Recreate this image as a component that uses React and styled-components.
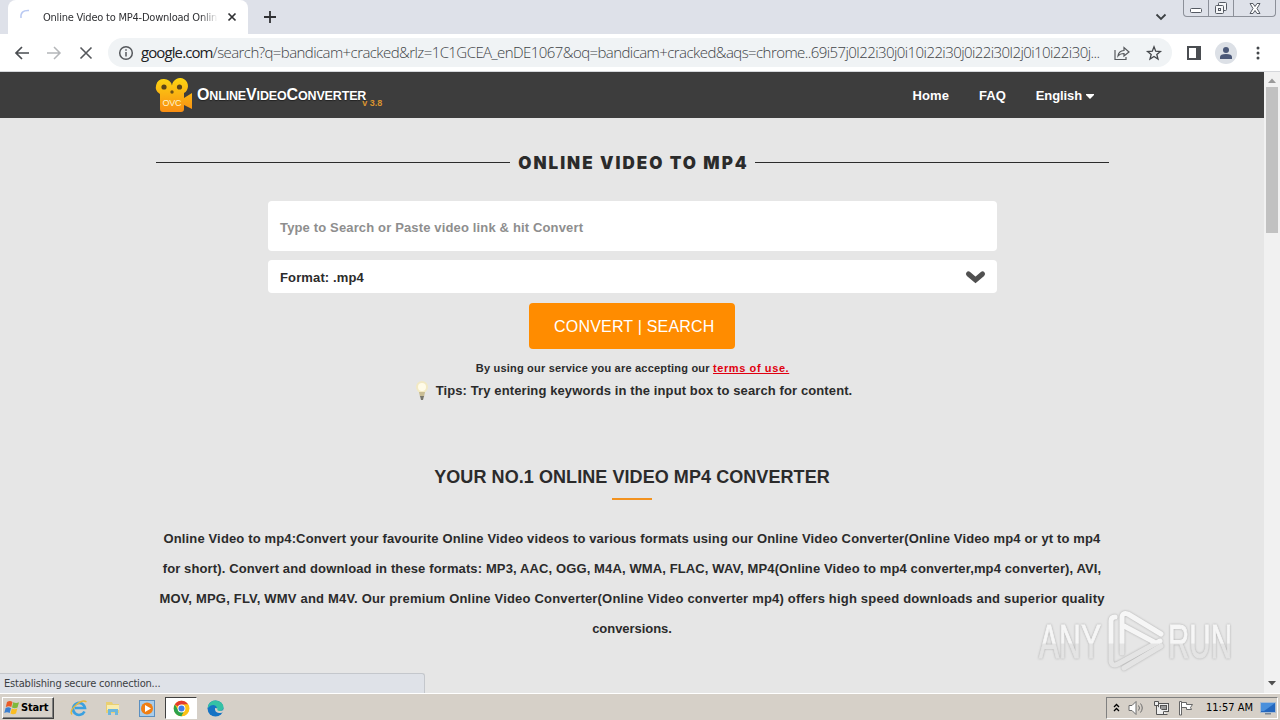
import React from "react";
import styled, { createGlobalStyle } from 'styled-components'

// page styles

const GlobalStyle = createGlobalStyle`
  * {
    box-sizing: border-box;
  }
  body {
    margin: 0;
    overflow: hidden;
    background: #e6e6e6;
    font-family: "Liberation Sans", Arial, sans-serif;
  }
  svg {
    display: block;
    flex: none;
    overflow: visible;
  }
`

const Screen = styled.div`
  position: relative;
  display: flex;
  flex-direction: column;
  width: 1280px;
  height: 720px;
  overflow: hidden;
`

// browser chrome

const TabStrip = styled.div`
  display: flex;
  height: 34px;
  flex: none;
  background: #dee1e9;
`

const Tab = styled.div`
  display: flex;
  align-items: center;
  width: 240px;
  margin-left: 8px;
  padding: 0 10px 0 12px;
  background: #fff;
  border-radius: 8px 8px 0 0;
`

const TabTitle = styled.div`
  width: 175px;
  margin-left: 8px;
  padding-top: 1px;
  white-space: nowrap;
  font: 11px/16px "DejaVu Sans Condensed", "DejaVu Sans", sans-serif;
  letter-spacing: ${props => props.$spacing};
  color: #303134;
  mask-image: linear-gradient(to right, #000 90%, transparent);
`

const TabClose = styled.div`
  margin-left: 8px;
`

const NewTab = styled.div`
  margin: 11px 0 0 16px;
`

const StripEnd = styled.div`
  display: flex;
  margin-left: auto;
  gap: 16px;
`

const WindowButtons = styled.div`
  display: flex;
  width: 93px;
  height: 17px;
  margin-right: 4px;
  border: 1px solid #8c9099;
  border-top: none;
  border-radius: 0 0 4px 4px;
`

const WindowButton = styled.div`
  display: flex;
  align-items: center;
  justify-content: center;
  width: ${props => props.$width};
  border-right: ${props => props.$last ? 'none' : '1px solid #8c9099'};
`

const Toolbar = styled.div`
  display: flex;
  align-items: center;
  height: 38px;
  flex: none;
  padding-left: 14px;
  background: #fff;
  border-bottom: 1px solid #d5d7db;
`

const NavIcons = styled.div`
  display: flex;
  gap: 16px;
`

const AddressBar = styled.div`
  display: flex;
  align-items: center;
  width: 1064px;
  height: 29px;
  margin-left: 14px;
  padding: 0 10px;
  border-radius: 15px;
  background: #f0f3f5;
`

const Url = styled.div`
  width: 973px;
  flex: none;
  margin-left: 7px;
  padding-bottom: 1px;
  white-space: nowrap;
  font: 300 15px/20px "Open Sans", sans-serif;
  letter-spacing: ${props => props.$spacing};
  color: #3f4347;
  span {
    font-weight: 400;
    letter-spacing: -0.9px;
    color: #202124;
  }
`

const BarIcons = styled.div`
  display: flex;
  gap: 16px;
`

const ToolbarEnd = styled.div`
  display: flex;
  align-items: center;
  gap: 10px;
  margin-left: 14px;
`

const Avatar = styled.div`
  display: flex;
  align-items: center;
  justify-content: center;
  width: 22px;
  height: 22px;
  border-radius: 50%;
  margin-left: 3px;
  background: #dce0e6;
`

// site

const View = styled.div`
  display: flex;
  height: 621px;
  flex: none;
`

const Page = styled.div`
  display: flex;
  flex-direction: column;
  width: 1264px;
  background: #e6e6e6;
  color: #2b2b2b;
`

const SiteHeader = styled.div`
  display: flex;
  align-items: center;
  height: 46px;
  flex: none;
  padding: 1px 170px 0 156px;
  background: #3d3d3d;
`

const Brand = styled.div`
  display: flex;
  align-items: flex-end;
  color: #fff;
  font-weight: bold;
  white-space: nowrap;
`

const BrandName = styled.div`
  margin: 0 0 8px 4px;
  font-size: 12.5px;
  line-height: 18px;
  letter-spacing: ${props => props.$spacing};
  text-shadow: 0 1px 1px #222;
  big {
    font-size: 16px;
  }
`

const Version = styled.div`
  margin: 0 0 5px -4px;
  font-size: 9px;
  line-height: 10px;
  letter-spacing: 0;
  color: #d9942f;
`

const Menu = styled.div`
  display: flex;
  gap: 30px;
  margin-left: auto;
  padding-top: 1px;
`

const MenuItem = styled.div`
  display: flex;
  align-items: center;
  gap: 4px;
  font-size: 13px;
  font-weight: bold;
  line-height: 20px;
  letter-spacing: ${props => props.$spacing};
  color: #fff;
`

const PageTitle = styled.div`
  display: flex;
  align-items: center;
  height: 24px;
  margin: 32px 155px 27px 156px;
  gap: 8px;
  font: 900 17px/24px Inter, sans-serif;
  letter-spacing: ${props => props.$spacing};
  white-space: nowrap;
  span {
    padding-top: 1px;
    margin-right: -2px;
  }
  &:before, &:after {
    content: '';
    height: 1px;
    flex: 1;
    background: #2b2b2b;
  }
`

const FormBox = styled.div`
  display: flex;
  flex-direction: column;
  align-items: center;
  width: 729px;
  margin-left: 268px;
`

const Field = styled.div`
  display: flex;
  align-items: center;
  justify-content: space-between;
  width: 100%;
  height: ${props => props.$height};
  margin-bottom: ${props => props.$gap};
  padding: 2px 12px 0;
  border-radius: 4px;
  background: #fff;
  font-size: 13px;
  font-weight: bold;
  letter-spacing: ${props => props.$spacing};
  color: ${props => props.$color};
`

const ConvertButton = styled.div`
  width: 206px;
  height: 46px;
  margin-right: 1px;
  padding-left: 25px;
  border-radius: 4px;
  background: #ff8c00;
  color: #fff;
  font-size: 16px;
  line-height: 47px;
  letter-spacing: ${props => props.$spacing};
  white-space: nowrap;
`

const Terms = styled.div`
  margin-top: 11px;
  font-size: 11px;
  font-weight: bold;
  line-height: 16px;
  letter-spacing: ${props => props.$spacing};
  white-space: nowrap;
  span {
    letter-spacing: 0.6px;
    color: #e00010;
    text-decoration: underline;
  }
`

const Tips = styled.div`
  display: flex;
  align-items: center;
  gap: 5px;
  margin-top: 2px;
  height: 24px;
  font-size: 13px;
  font-weight: bold;
  letter-spacing: ${props => props.$spacing};
  white-space: nowrap;
`

const SectionTitle = styled.div`
  margin-top: 62px;
  text-align: center;
  font-size: 18px;
  font-weight: bold;
  line-height: 26px;
  letter-spacing: ${props => props.$spacing};
  &:after {
    content: '';
    display: block;
    width: 40px;
    height: 2px;
    margin: 8px auto 0;
    background: #f2921f;
  }
`

const Description = styled.div`
  margin-top: 24px;
  text-align: center;
  font-size: 13px;
  font-weight: bold;
  line-height: 30px;
  white-space: nowrap;
`

const Line = styled.div`
  letter-spacing: ${props => props.$spacing};
`

const Scrollbar = styled.div`
  display: flex;
  flex-direction: column;
  align-items: center;
  width: 16px;
  padding: 6px 0 7px;
  background: #f1f1f1;
`

const Thumb = styled.div`
  width: 12px;
  height: 146px;
  margin: 4px 0 auto;
  background: #c1c1c1;
`

const StatusBubble = styled.div`
  position: absolute;
  left: 0;
  top: 673px;
  width: 425px;
  height: 20px;
  padding-left: 4px;
  border: 1px solid #c4c7cc;
  border-width: 1px 1px 0 0;
  border-radius: 0 3px 0 0;
  background: #dfe2e8;
  font: 11px/19px "DejaVu Sans Condensed", "DejaVu Sans", sans-serif;
  letter-spacing: ${props => props.$spacing};
  color: #3c4043;
`

const Watermark = styled.div`
  position: absolute;
  left: 1036px;
  top: 605px;
  filter: drop-shadow(0 0 1px #aaa);
`

// taskbar

const Taskbar = styled.div`
  display: flex;
  align-items: center;
  height: 27px;
  flex: none;
  padding: 2px 2px 0 2px;
  border-top: 1px solid #fff;
  background: #d6d0c8;
`

const StartButton = styled.div`
  display: flex;
  align-items: center;
  gap: 1px;
  width: 52px;
  height: 22px;
  padding-left: 1px;
  border: 1px solid;
  border-color: #fff #404040 #404040 #fff;
  box-shadow: inset -1px -1px 0 #808080;
  font: bold 11px/20px "DejaVu Sans Condensed", "DejaVu Sans", sans-serif;
  letter-spacing: ${props => props.$spacing};
  color: #000;
`

const QuickLaunch = styled.div`
  display: flex;
  align-items: center;
  margin-left: 8px;
`

const LaunchItem = styled.div`
  display: flex;
  align-items: center;
  justify-content: center;
  width: 34px;
  height: 22px;
`

const ActiveItem = styled(LaunchItem)`
  width: 32px;
  margin: 0 1px;
  border: 1px solid;
  border-color: #404040 #fff #fff #404040;
  background: #fff;
`

const Tray = styled.div`
  display: flex;
  align-items: center;
  height: 22px;
  width: 172px;
  margin-left: auto;
  padding-left: 6px;
  border: 1px solid;
  border-color: #808080 #fff #fff #808080;
`

const Clock = styled.div`
  width: 48px;
  margin: 0 6px 0 12px;
  white-space: nowrap;
  font: 11px/20px "DejaVu Sans Condensed", "DejaVu Sans", sans-serif;
  letter-spacing: ${props => props.$spacing};
  color: #000;
`

const TrayIcons = styled.div`
  display: flex;
  align-items: center;
  gap: 8px;
`

const CameraLogo = () => (
  <svg width="37" height="34" viewBox="0 0 37 34">
    <defs>
      <linearGradient id="cam" x1="0" y1="0" x2="0" y2="1">
        <stop offset="0" stopColor="#fbd512" />
        <stop offset="1" stopColor="#f98d12" />
      </linearGradient>
    </defs>
    <path fill="url(#cam)" d="M8 0a8 8 0 0 1 8 6.500a8 8 0 1 1 12 7.500V19l8-5v16l-8-4v4q0 3-3 3H7q-3 0-3-3V15A8 8 0 0 1 8 0z" />
    <circle cx="8" cy="8" r="2.600" fill="#5a4518" />
    <circle cx="23.500" cy="8" r="2.600" fill="#5a4518" />
    <circle cx="16" cy="13" r="1.700" fill="#6e5218" />
    <text x="6.500" y="27" fontSize="9" fontWeight="400" textLength="19" fill="#fff3d0">OVC</text>
  </svg>
)

const StartFlag = () => (
  <svg width="16" height="16" viewBox="0 0 16 16">
    <path d="M3 2q3-2 5.500 0L7.300 7Q5 5.500 1.800 7z" fill="#ea5b26" />
    <path d="M9.200 2.300q3 1.500 5.800 0L13.500 7.500q-2.700 1.500-5.500 0z" fill="#7fb93c" />
    <path d="M1.600 8Q4.500 6.500 7 8.200L5.700 13Q3 11.500.3 13z" fill="#3b7fd0" />
    <path d="M7.800 8.600q2.700 1.500 5.500 0L12 13.400q-3 1.500-5.500 0z" fill="#fbbd22" />
  </svg>
)

const ChromeIcon = () => (
  <svg width="17" height="17" viewBox="0 0 48 48">
    <circle cx="24" cy="24" r="22" fill="#fbc116" />
    <path d="M24 24L5 13A22 22 0 0 1 43 13H24z" fill="#e33b2e" />
    <path d="M5 13L15 29L24 24L33 29L24 46A22 22 0 0 1 5 13z" fill="#2da24c" />
    <path d="M43 13A22 22 0 0 1 24 46L33 29V13z" fill="#fbc116" />
    <circle cx="24" cy="24" r="11" fill="#fff" />
    <circle cx="24" cy="24" r="8.500" fill="#3f7de8" />
  </svg>
)

const AnyRunMark = () => (
  <svg width="200" height="72" viewBox="0 0 200 72">
    <defs>
      <linearGradient id="wm" x1="0" y1="0" x2="0" y2="72" gradientUnits="userSpaceOnUse">
        <stop offset=".53" stopColor="#f6f6f6" />
        <stop offset=".54" stopColor="#e4e4e4" />
      </linearGradient>
    </defs>
    <g fill="url(#wm)" stroke="url(#wm)" strokeWidth="1" fontFamily="Liberation Sans Narrow, Liberation Sans, sans-serif" fontSize="49">
      <text x="3" y="53" textLength="62" lengthAdjust="spacingAndGlyphs">ANY</text>
      <text x="132" y="53" textLength="64" lengthAdjust="spacingAndGlyphs">RUN</text>
    </g>
    <g fill="none" stroke="url(#wm)" strokeWidth="5" strokeLinejoin="round" strokeLinecap="round">
      <path d="M79 12q-4 0-4 4v40q1 6 7 3l42-23" />
      <path d="M125 29L92 9q-6-2-6 4v35" />
      <path d="M88 63l37-22M88 21l30 16" />
    </g>
  </svg>
)

const App = () => {
  return (
    <Screen>
      <GlobalStyle />
      <TabStrip>
        <Tab>
          <svg width="15" height="16" viewBox="0 0 15 16" fill="none">
            <path d="M1 9Q0 1 9 1.500" stroke="#b9c9f2" strokeWidth="1.500" />
          </svg>
          <TabTitle $spacing="-0.22px">Online Video to MP4-Download Onlin</TabTitle>
          <TabClose>
            <svg width="12" height="12" viewBox="0 0 12 12" stroke="#303134" strokeWidth="1.700">
              <path d="M2.500 2.500l7 7M9.500 2.500l-7 7" />
            </svg>
          </TabClose>
        </Tab>
        <NewTab>
          <svg width="12" height="12" viewBox="0 0 12 12" stroke="#303134" strokeWidth="1.800">
            <path d="M6 0v12M0 6h12" />
          </svg>
        </NewTab>
        <StripEnd>
          <svg width="12" height="34" viewBox="0 0 12 34" fill="none" stroke="#3c4043" strokeWidth="1.800">
            <path d="M1.500 14.500L6 19l4.500-4.500" />
          </svg>
          <WindowButtons>
            <WindowButton $width="25px">
              <svg width="12" height="16" viewBox="0 0 12 16" fill="#fff" stroke="#555a63">
                <rect x=".5" y="8.500" width="11" height="4" rx="1" />
              </svg>
            </WindowButton>
            <WindowButton $width="25px">
              <svg width="14" height="14" viewBox="0 0 14 14" fill="#f5f6f8" stroke="#555a63">
                <rect x="4.500" y="1.500" width="8" height="8" rx="1" />
                <rect x="1.500" y="4.500" width="8" height="8" rx="1" />
                <rect x="4.500" y="7.500" width="2" height="2" />
              </svg>
            </WindowButton>
            <WindowButton $width="41px" $last>
              <svg width="12" height="11" viewBox="0 0 12 11" fill="#fff" stroke="#555a63">
                <path d="M1 .5h3l2 3 2-3h3L8 5.500l3 5H8l-2-3-2 3H1l3-5z" />
              </svg>
            </WindowButton>
          </WindowButtons>
        </StripEnd>
      </TabStrip>
      <Toolbar>
        <NavIcons>
          <svg width="16" height="16" viewBox="0 0 16 16" fill="none" stroke="#4a4d51" strokeWidth="1.700">
            <path d="M15 8H2M8 2L2 8l6 6" />
          </svg>
          <svg width="16" height="16" viewBox="0 0 16 16" fill="none" stroke="#b4b6b9" strokeWidth="1.500">
            <path d="M1 8h13M8 2l6 6-6 6" />
          </svg>
          <svg width="16" height="16" viewBox="0 0 16 16" fill="none" stroke="#55585c" strokeWidth="1.600">
            <path d="M2.500 2.500l11 11M13.500 2.500l-11 11" />
          </svg>
        </NavIcons>
        <AddressBar>
          <svg width="16" height="16" viewBox="0 0 16 16" fill="none" stroke="#55585c" strokeWidth="1.500">
            <circle cx="8" cy="8" r="6.300" />
            <path d="M8 7v4.500M8 4.200v1.600" />
          </svg>
          <Url $spacing="-0.57px"><span>google.com</span>/search?q=bandicam+cracked&amp;rlz=1C1GCEA_enDE1067&amp;oq=bandicam+cracked&amp;aqs=chrome..69i57j0l22i30j0i10i22i30j0i22i30l2j0i10i22i30j...</Url>
          <BarIcons>
            <svg width="16" height="16" viewBox="0 0 16 16" fill="none" stroke="#55585c" strokeWidth="1.200">
              <path d="M1 5v9.500h11V12M4 11q.5-5 6-5.500V2.500L15 7l-5 4V8.500Q6 8.500 4 11z" />
            </svg>
            <svg width="16" height="16" viewBox="0 0 16 16" fill="none" stroke="#44474b" strokeWidth="1.300">
              <path d="M8 1.800l1.700 4.400 4.700.3-3.600 3 1.200 4.600L8 11.500l-4 2.600 1.200-4.600-3.600-3 4.700-.3z" />
            </svg>
          </BarIcons>
        </AddressBar>
        <ToolbarEnd>
          <svg width="16" height="16" viewBox="0 0 16 16">
            <path d="M1 1h14v14H1zM3 3v10h7V3z" fill="#4a4d51" fillRule="evenodd" />
          </svg>
          <Avatar>
            <svg width="14" height="14" viewBox="0 0 14 14" fill="#4b5878">
              <circle cx="7" cy="4" r="3" />
              <path d="M1 13v-2q0-3 6-3t6 3v2z" />
            </svg>
          </Avatar>
          <svg width="16" height="16" viewBox="0 0 16 16" fill="#44474b">
            <circle cx="11" cy="3" r="1.500" />
            <circle cx="11" cy="8" r="1.500" />
            <circle cx="11" cy="13" r="1.500" />
          </svg>
        </ToolbarEnd>
      </Toolbar>
      <View>
        <Page>
          <SiteHeader>
            <Brand>
              <CameraLogo />
              <BrandName $spacing="-0.15px"><big>O</big>NLINE<big>V</big>IDEO<big>C</big>ONVERTER</BrandName>
              <Version>v 3.8</Version>
            </Brand>
            <Menu>
              <MenuItem $spacing="0.1px">Home</MenuItem>
              <MenuItem $spacing="0px">FAQ</MenuItem>
              <MenuItem $spacing="-0.1px">
                English
                <svg width="8" height="5" viewBox="0 0 8 5" fill="#fff">
                  <path d="M0 0h8v1L4 5 0 1z" />
                </svg>
              </MenuItem>
            </Menu>
          </SiteHeader>
          <PageTitle $spacing="2px"><span>ONLINE VIDEO TO MP4</span></PageTitle>
          <FormBox>
            <Field $height="50px" $gap="9px" $color="#8e8e8e" $spacing="0.15px">Type to Search or Paste video link &amp; hit Convert</Field>
            <Field $height="33px" $gap="10px" $color="#2b2b2b" $spacing="0.13px">
              Format: .mp4
              <svg width="19" height="14" viewBox="0 0 19 14" fill="none" stroke="#505050" strokeWidth="5" strokeLinecap="round" strokeLinejoin="miter">
                <path d="M2.500 3L9.500 9l7-6" />
              </svg>
            </Field>
            <ConvertButton $spacing="0.2px">CONVERT | SEARCH</ConvertButton>
            <Terms $spacing="0.2px">By using our service you are accepting our <span>terms of use.</span></Terms>
            <Tips $spacing="0.11px">
              <svg width="18" height="24" viewBox="0 0 18 24">
                <circle cx="9" cy="9" r="6" fill="#f2e9c4" />
                <circle cx="9" cy="9" r="4" fill="#fffbe8" />
                <path d="M6 14h6l-1 5H7z" fill="#c9bd94" />
                <path d="M7 18h4l-1 4H8z" fill="#77766c" />
              </svg>
              Tips: Try entering keywords in the input box to search for content.
            </Tips>
          </FormBox>
          <SectionTitle $spacing="0.07px">YOUR NO.1 ONLINE VIDEO MP4 CONVERTER</SectionTitle>
          <Description>
            <Line $spacing="0.143px">Online Video to mp4:Convert your favourite Online Video videos to various formats using our Online Video Converter(Online Video mp4 or yt to mp4</Line>
            <Line $spacing="0.12px">for short). Convert and download in these formats: MP3, AAC, OGG, M4A, WMA, FLAC, WAV, MP4(Online Video to mp4 converter,mp4 converter), AVI,</Line>
            <Line $spacing="0.19px">MOV, MPG, FLV, WMV and M4V. Our premium Online Video Converter(Online Video converter mp4) offers high speed downloads and superior quality</Line>
            <Line $spacing="-0.05px">conversions.</Line>
          </Description>
        </Page>
        <Scrollbar>
          <svg width="8" height="5" viewBox="0 0 8 5" fill="#9a9a9a"><path d="M0 5l4-4.500L8 5z" /></svg>
          <Thumb />
          <svg width="8" height="5" viewBox="0 0 8 5" fill="#505050"><path d="M0 0l4 4.500L8 0z" /></svg>
        </Scrollbar>
      </View>
      <Taskbar>
        <StartButton $spacing="-0.15px"><StartFlag />Start</StartButton>
        <QuickLaunch>
          <LaunchItem>
            <svg width="18" height="18" viewBox="0 0 18 18" fill="none">
              <path d="M14.500 12.500A6 6 0 1 1 15 9H5" stroke="#3aa0e0" strokeWidth="2.600" />
              <path d="M2 15.500Q-1 12 6 6T16.500 3" stroke="#e8b83a" strokeWidth="1.300" />
            </svg>
          </LaunchItem>
          <LaunchItem>
            <svg width="16" height="16" viewBox="0 0 16 16">
              <path d="M1 2h6l1 2h6v9H1z" fill="#e9cf72" />
              <path d="M2 5h12v5H2z" fill="#f8ecae" />
              <path d="M3 15V9h10v6h-3v-3H6v3z" fill="#6db7dd" />
            </svg>
          </LaunchItem>
          <LaunchItem>
            <svg width="16" height="17" viewBox="0 0 16 17">
              <rect x=".5" y=".5" width="15" height="16" fill="#a9cdea" stroke="#5b8fc0" />
              <circle cx="8" cy="8.500" r="6" fill="#f07f14" />
              <path d="M6 5l6 3.500L6 12z" fill="#fff" />
            </svg>
          </LaunchItem>
          <ActiveItem><ChromeIcon /></ActiveItem>
          <LaunchItem>
            <svg width="17" height="17" viewBox="0 0 17 17">
              <circle cx="8.500" cy="8.500" r="8" fill="#1673c4" />
              <path d="M1 6Q3 .5 8.500.5q7.500.5 8 7-.5 4-5 3.500-2.500-.5-1.500-2Q10 5.500 6.500 5 3 5 1 8z" fill="#35c1a5" />
              <path d="M8 8q-.5 4.500 4 5 3 .3 4.500-1v-2.500q-1 1.500-4 1.500-3-.5-2-2.500z" fill="#d6d0c8" />
            </svg>
          </LaunchItem>
        </QuickLaunch>
        <Tray>
          <TrayIcons>
            <svg width="7" height="10" viewBox="0 0 7 10" fill="none" stroke="#000" strokeWidth="1.300">
              <path d="M1 4l2.500-2.500L6 4M1 8l2.500-2.500L6 8" />
            </svg>
            <svg width="17" height="16" viewBox="0 0 17 16" fill="#fff" stroke="#6c6c6c">
              <path d="M1 5.500h3l4-4v13l-4-4H1z" />
              <path d="M10.500 5.500q2 2.500 0 5M12.500 3.500q3.500 4.500 0 9" fill="none" />
            </svg>
            <svg width="17" height="16" viewBox="0 0 17 16" fill="#eee" stroke="#555">
              <rect x="5.500" y="3.500" width="10" height="8" />
              <rect x="7.500" y="5.500" width="6" height="4" fill="#999" />
              <path d="M1.500 1.500h4v4h-4zM3.500 5.500v9h11M10.500 11.500v3" />
            </svg>
            <svg width="16" height="16" viewBox="0 0 16 16" fill="#fff" stroke="#666">
              <path d="M1.500 15V1.500h2V15zM3.500 2.500h5v2h6l-2 3 1 2h-5v-2h-5z" />
            </svg>
          </TrayIcons>
          <Clock $spacing="0px">11:57 AM</Clock>
          <svg width="16" height="14" viewBox="0 0 16 14">
            <rect x=".5" y="1.500" width="15" height="10" fill="#2467be" stroke="#a7bbd2" />
            <path d="M1 2h14L4 10H1z" fill="#4a90dc" />
            <path d="M5 12h6v1.500H5z" fill="#7b8794" />
          </svg>
        </Tray>
      </Taskbar>
      <StatusBubble $spacing="-0.2px">Establishing secure connection...</StatusBubble>
      <Watermark><AnyRunMark /></Watermark>
    </Screen>
  )
}

export default App;
